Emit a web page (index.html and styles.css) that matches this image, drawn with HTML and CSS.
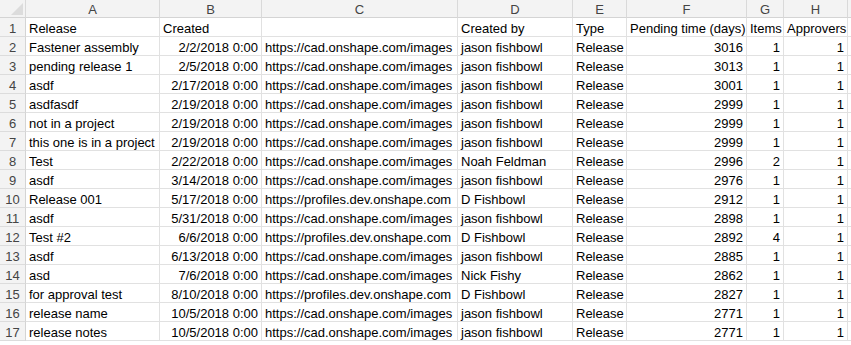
FILE: index.html
```html
<!DOCTYPE html>
<html>
<head>
<meta charset="utf-8">
<link rel="stylesheet" href="styles.css">
</head>
<body>
<div class="sheet">
  <div class="row head">
    <div class="c rh corner"><span class="tri"></span></div>
    <div class="c">A</div><div class="c">B</div><div class="c">C</div><div class="c">D</div>
    <div class="c">E</div><div class="c">F</div><div class="c">G</div><div class="c">H</div><div class="c"></div>
  </div>
  <div class="row"><div class="c rh">1</div><div class="c">Release</div><div class="c">Created</div><div class="c"></div><div class="c">Created by</div><div class="c">Type</div><div class="c">Pending time (days)</div><div class="c">Items</div><div class="c">Approvers</div><div class="c"></div></div>
  <div class="row"><div class="c rh">2</div><div class="c">Fastener assembly</div><div class="c n">2/2/2018 0:00</div><div class="c">https://cad.onshape.com/images</div><div class="c">jason fishbowl</div><div class="c">Release</div><div class="c n">3016</div><div class="c n">1</div><div class="c n">1</div><div class="c"></div></div>
  <div class="row"><div class="c rh">3</div><div class="c">pending release 1</div><div class="c n">2/5/2018 0:00</div><div class="c">https://cad.onshape.com/images</div><div class="c">jason fishbowl</div><div class="c">Release</div><div class="c n">3013</div><div class="c n">1</div><div class="c n">1</div><div class="c"></div></div>
  <div class="row"><div class="c rh">4</div><div class="c">asdf</div><div class="c n">2/17/2018 0:00</div><div class="c">https://cad.onshape.com/images</div><div class="c">jason fishbowl</div><div class="c">Release</div><div class="c n">3001</div><div class="c n">1</div><div class="c n">1</div><div class="c"></div></div>
  <div class="row"><div class="c rh">5</div><div class="c">asdfasdf</div><div class="c n">2/19/2018 0:00</div><div class="c">https://cad.onshape.com/images</div><div class="c">jason fishbowl</div><div class="c">Release</div><div class="c n">2999</div><div class="c n">1</div><div class="c n">1</div><div class="c"></div></div>
  <div class="row"><div class="c rh">6</div><div class="c">not in a project</div><div class="c n">2/19/2018 0:00</div><div class="c">https://cad.onshape.com/images</div><div class="c">jason fishbowl</div><div class="c">Release</div><div class="c n">2999</div><div class="c n">1</div><div class="c n">1</div><div class="c"></div></div>
  <div class="row"><div class="c rh">7</div><div class="c">this one is in a project</div><div class="c n">2/19/2018 0:00</div><div class="c">https://cad.onshape.com/images</div><div class="c">jason fishbowl</div><div class="c">Release</div><div class="c n">2999</div><div class="c n">1</div><div class="c n">1</div><div class="c"></div></div>
  <div class="row"><div class="c rh">8</div><div class="c">Test</div><div class="c n">2/22/2018 0:00</div><div class="c">https://cad.onshape.com/images</div><div class="c">Noah Feldman</div><div class="c">Release</div><div class="c n">2996</div><div class="c n">2</div><div class="c n">1</div><div class="c"></div></div>
  <div class="row"><div class="c rh">9</div><div class="c">asdf</div><div class="c n">3/14/2018 0:00</div><div class="c">https://cad.onshape.com/images</div><div class="c">jason fishbowl</div><div class="c">Release</div><div class="c n">2976</div><div class="c n">1</div><div class="c n">1</div><div class="c"></div></div>
  <div class="row"><div class="c rh">10</div><div class="c">Release 001</div><div class="c n">5/17/2018 0:00</div><div class="c">https://profiles.dev.onshape.com</div><div class="c">D Fishbowl</div><div class="c">Release</div><div class="c n">2912</div><div class="c n">1</div><div class="c n">1</div><div class="c"></div></div>
  <div class="row"><div class="c rh">11</div><div class="c">asdf</div><div class="c n">5/31/2018 0:00</div><div class="c">https://cad.onshape.com/images</div><div class="c">jason fishbowl</div><div class="c">Release</div><div class="c n">2898</div><div class="c n">1</div><div class="c n">1</div><div class="c"></div></div>
  <div class="row"><div class="c rh">12</div><div class="c">Test #2</div><div class="c n">6/6/2018 0:00</div><div class="c">https://profiles.dev.onshape.com</div><div class="c">D Fishbowl</div><div class="c">Release</div><div class="c n">2892</div><div class="c n">4</div><div class="c n">1</div><div class="c"></div></div>
  <div class="row"><div class="c rh">13</div><div class="c">asdf</div><div class="c n">6/13/2018 0:00</div><div class="c">https://cad.onshape.com/images</div><div class="c">jason fishbowl</div><div class="c">Release</div><div class="c n">2885</div><div class="c n">1</div><div class="c n">1</div><div class="c"></div></div>
  <div class="row"><div class="c rh">14</div><div class="c">asd</div><div class="c n">7/6/2018 0:00</div><div class="c">https://cad.onshape.com/images</div><div class="c">Nick Fishy</div><div class="c">Release</div><div class="c n">2862</div><div class="c n">1</div><div class="c n">1</div><div class="c"></div></div>
  <div class="row"><div class="c rh">15</div><div class="c">for approval test</div><div class="c n">8/10/2018 0:00</div><div class="c">https://profiles.dev.onshape.com</div><div class="c">D Fishbowl</div><div class="c">Release</div><div class="c n">2827</div><div class="c n">1</div><div class="c n">1</div><div class="c"></div></div>
  <div class="row"><div class="c rh">16</div><div class="c">release name</div><div class="c n">10/5/2018 0:00</div><div class="c">https://cad.onshape.com/images</div><div class="c">jason fishbowl</div><div class="c">Release</div><div class="c n">2771</div><div class="c n">1</div><div class="c n">1</div><div class="c"></div></div>
  <div class="row"><div class="c rh">17</div><div class="c">release notes</div><div class="c n">10/5/2018 0:00</div><div class="c">https://cad.onshape.com/images</div><div class="c">jason fishbowl</div><div class="c">Release</div><div class="c n">2771</div><div class="c n">1</div><div class="c n">1</div><div class="c"></div></div>
</div>
</body>
</html>
```
FILE: styles.css
```css
html, body {
  margin: 0;
  padding: 0;
  background: #ffffff;
}
.sheet {
  font-family: "Liberation Sans", Arial, sans-serif;
  font-size: 13px;
  color: #000;
  width: 851px;
  overflow: hidden;
}
.row {
  display: grid;
  grid-template-columns: 26px 134px 102px 196px 115px 54px 120px 37px 64px 1fr;
  height: 19px;
}
.c {
  box-sizing: border-box;
  height: 19px;
  border-right: 1px solid #e1e1e1;
  border-bottom: 1px solid #e1e1e1;
  padding: 4px 3px 0 3px;
  line-height: 14px;
  white-space: nowrap;
  overflow: hidden;
}
.n {
  text-align: right;
}
.rh {
  background: #f3f3f3;
  color: #444;
  text-align: center;
  padding-left: 0;
  padding-right: 0;
  border-right-color: #d4d4d4;
  border-bottom-color: #dcdcdc;
}
.head {
  height: 18px;
}
.head .c {
  height: 18px;
  background: #f3f3f3;
  color: #444;
  text-align: center;
  padding-top: 3px;
  border-right-color: #d9d9d9;
  border-bottom-color: #d4d4d4;
}
.corner {
  position: relative;
}
.tri {
  position: absolute;
  right: 2px;
  bottom: 2px;
  width: 0;
  height: 0;
  border-left: 12px solid transparent;
  border-bottom: 12px solid #dcdcdc;
}
```
